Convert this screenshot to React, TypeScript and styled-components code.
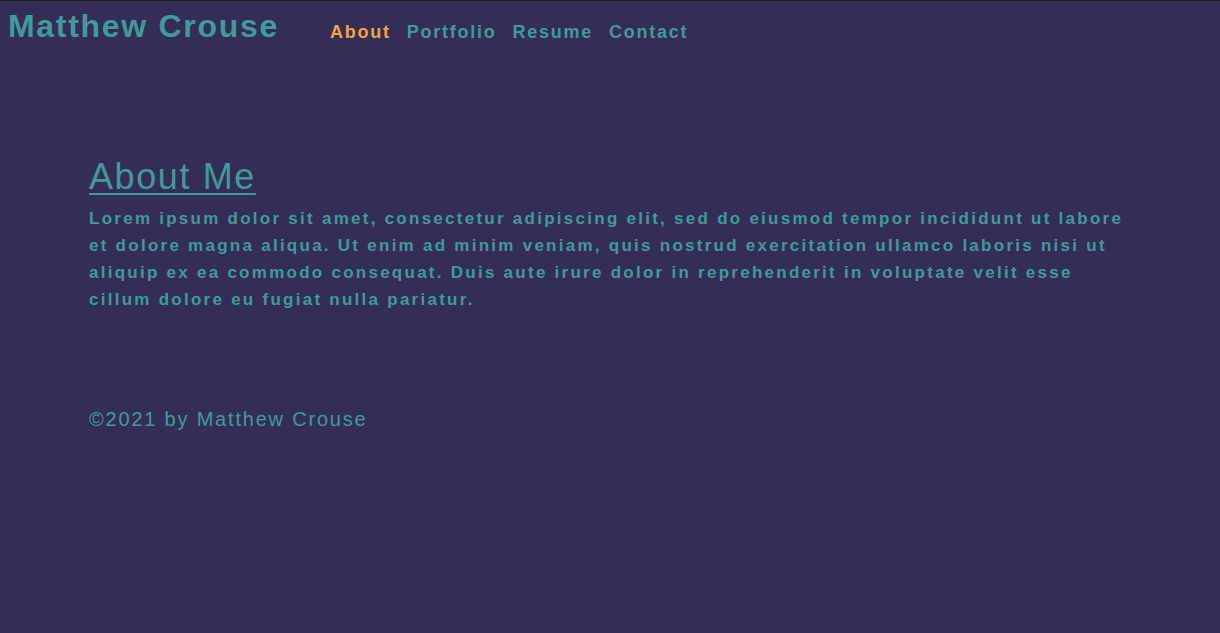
import React from "react";
import styled, { createGlobalStyle } from "styled-components";

const teal = "#409a9b";
const orange = "#f2a43f";
const bg = "#342e57";

const Global = createGlobalStyle`
  html, body { margin: 0; padding: 0; background: ${bg}; }
  body {
    font-family: "Liberation Sans", Arial, Helvetica, sans-serif;
    border-top: 1px solid #1e1c26;
    min-height: 632px;
  }
`;

const Page = styled.div`
  display: flex;
  flex-direction: column;
`;

const Header = styled.header`
  display: flex;
  align-items: baseline;
  padding: 5px 8px 0 8px;
  gap: 51px;
`;

const Brand = styled.h1`
  margin: 0;
  font-size: 32px;
  font-weight: 700;
  letter-spacing: 1.7px;
  color: ${teal};
  line-height: 40px;
`;

const Nav = styled.nav`
  display: flex;
  gap: 16px;
  transform: translateY(1px);
`;

const NavLink = styled.a<{ $active?: boolean }>`
  font-size: 18px;
  font-weight: 700;
  letter-spacing: 1.75px;
  text-decoration: none;
  color: ${(p) => (p.$active ? orange : teal)};
  cursor: pointer;
`;

const Main = styled.main`
  padding: 110px 89px 0 89px;
  display: flex;
  flex-direction: column;
  gap: 7px;
`;

const Heading = styled.h2`
  margin: 0;
  font-size: 36px;
  font-weight: 400;
  letter-spacing: 1.6px;
  color: ${teal};
  text-decoration: underline;
  text-decoration-thickness: 2px;
  text-underline-offset: 4px;
  line-height: 42px;
`;

const Para = styled.p`
  margin: 0;
  font-size: 17px;
  font-weight: 700;
  letter-spacing: 2.26px;
  line-height: 27px;
  color: ${teal};
`;

const Footer = styled.footer`
  padding: 95px 89px 0 89px;
  font-size: 20px;
  letter-spacing: 1.8px;
  color: ${teal};
`;

export default function App() {
  return (
    <Page>
      <Global />
      <Header>
        <Brand>Matthew Crouse</Brand>
        <Nav>
          <NavLink $active>About</NavLink>
          <NavLink>Portfolio</NavLink>
          <NavLink>Resume</NavLink>
          <NavLink>Contact</NavLink>
        </Nav>
      </Header>
      <Main>
        <Heading>About Me</Heading>
        <Para>
          Lorem ipsum dolor sit amet, consectetur adipiscing elit, sed do eiusmod tempor incididunt ut labore et
          dolore magna aliqua. Ut enim ad minim veniam, quis nostrud exercitation ullamco laboris nisi ut aliquip ex
          ea commodo consequat. Duis aute irure dolor in reprehenderit in voluptate velit esse cillum dolore eu
          fugiat nulla pariatur.
        </Para>
      </Main>
      <Footer>©2021 by Matthew Crouse</Footer>
    </Page>
  );
}
